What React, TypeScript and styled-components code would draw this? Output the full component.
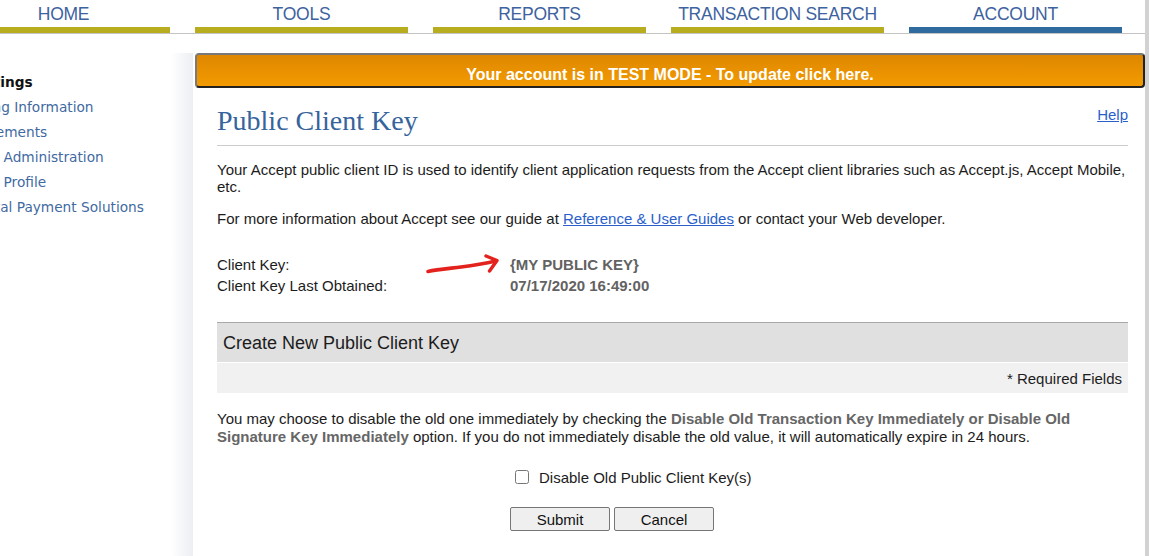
import React from "react";
import styled, { createGlobalStyle } from "styled-components";

const GlobalStyle = createGlobalStyle`
  html, body {
    margin: 0;
    padding: 0;
    background: #fff;
    overflow: hidden;
  }
  body {
    font-family: "Liberation Sans", Arial, sans-serif;
    color: #1e1e1e;
  }
`;

type TabItem = { label: string; active?: boolean };

const tabs: TabItem[] = [
  { label: "HOME" },
  { label: "TOOLS" },
  { label: "REPORTS" },
  { label: "TRANSACTION SEARCH" },
  { label: "ACCOUNT", active: true },
];

const sideLinks = [
  "Billing Information",
  "Statements",
  "User Administration",
  "User Profile",
  "Digital Payment Solutions",
];

const App: React.FC = () => {
  return (
    <>
      <GlobalStyle />
      <Page>
        <Nav>
          {tabs.map((t) => (
            <Tab key={t.label} $active={t.active}>
              <span>{t.label}</span>
            </Tab>
          ))}
        </Nav>

        <Body>
          <Sidebar>
            <SideHeading>Settings</SideHeading>
            {sideLinks.map((l) => (
              <SideLink key={l}>{l}</SideLink>
            ))}
          </Sidebar>

          <Main>
            <Banner>Your account is in TEST MODE - To update click here.</Banner>

            <Content>
              <TitleRow>
                <Title>Public Client Key</Title>
                <HelpLink href="#">Help</HelpLink>
              </TitleRow>

              <Para>
                Your Accept public client ID is used to identify client
                application requests from the Accept client libraries such as
                Accept.js, Accept Mobile, etc.
              </Para>
              <Para>
                For more information about Accept see our guide at{" "}
                <Link href="#">Reference &amp; User Guides</Link> or contact
                your Web developer.
              </Para>

              <KeyTable>
                <span>Client Key:</span>
                <KeyValue>{"{MY PUBLIC KEY}"}</KeyValue>
                <span>Client Key Last Obtained:</span>
                <KeyValue>07/17/2020 16:49:00</KeyValue>
                <Arrow width="78" height="24" viewBox="0 0 78 24">
                  <path
                    d="M3 18.5 C 12 16.5, 24 15.5, 36 14 C 48 12.5, 60 10.5, 71 8"
                    fill="none"
                    stroke="#e3211d"
                    strokeWidth="3.6"
                    strokeLinecap="round"
                  />
                  <path
                    d="M61 3 L72 7.5 L64.5 18"
                    fill="none"
                    stroke="#e3211d"
                    strokeWidth="3.4"
                    strokeLinecap="round"
                    strokeLinejoin="round"
                  />
                </Arrow>
              </KeyTable>

              <Section>
                <SectionHeader>Create New Public Client Key</SectionHeader>
                <SectionSub>* Required Fields</SectionSub>
              </Section>

              <SmallPara>
                You may choose to disable the old one immediately by checking
                the{" "}
                <strong>
                  Disable Old Transaction Key Immediately or Disable Old
                  Signature Key Immediately
                </strong>{" "}
                option. If you do not immediately disable the old value, it will
                automatically expire in 24 hours.
              </SmallPara>

              <FormColumn>
                <CheckRow>
                  <input type="checkbox" />
                  <span>Disable Old Public Client Key(s)</span>
                </CheckRow>
                <Buttons>
                  <Button>Submit</Button>
                  <Button>Cancel</Button>
                </Buttons>
              </FormColumn>
            </Content>
          </Main>
        </Body>
      </Page>
    </>
  );
};

export default App;

const Page = styled.div`
  width: 1188px;
  height: 556px;
  overflow: hidden;
  margin-left: -43px;
  border-right: 4px solid #d2d2d2;
`;

const Nav = styled.div`
  display: grid;
  grid-template-columns: repeat(5, 213px);
  column-gap: 25px;
  border-bottom: 1px solid #c4c4c4;
`;

const Tab = styled.div<{ $active?: boolean }>`
  display: flex;
  flex-direction: column;
  align-items: center;
  padding-top: 1px;
  span {
    height: 26px;
    line-height: 26px;
    font-size: 17.5px;
    letter-spacing: -0.25px;
    color: #3d62a0;
  }
  &::after {
    content: "";
    align-self: stretch;
    height: 6px;
    background: ${(p) => (p.$active ? "#2f6b9f" : "#b8ad1f")};
  }
`;

const Body = styled.div`
  display: flex;
  padding-top: 19px;
`;

const Sidebar = styled.div`
  box-sizing: border-box;
  width: 236px;
  min-height: 503px;
  flex-shrink: 0;
  padding: 17px 0 0 11px;
  font-family: "DejaVu Sans", Verdana, sans-serif;
  font-size: 13.7px;
  line-height: 25px;
  background: linear-gradient(
    to right,
    #fff 0,
    #fff calc(100% - 22px),
    #eceef2 100%
  );
`;

const SideHeading = styled.div`
  font-weight: bold;
  color: #111;
`;

const SideLink = styled.div`
  color: #3f6aa2;
  white-space: nowrap;
`;

const Main = styled.div`
  flex: 1;
  min-width: 0;
`;

const Banner = styled.div`
  margin-left: 2px;
  height: 28px;
  padding-top: 3px;
  line-height: 33px;
  border: 2px solid #222;
  border-top-color: #787878;
  border-left-color: #7a7a7a;
  border-radius: 4px;
  background: linear-gradient(#de8700, #f39b00);
  color: #fff;
  font-weight: bold;
  font-size: 16px;
  text-align: center;
`;

const Content = styled.div`
  padding: 0 17px 0 24px;
`;

const TitleRow = styled.div`
  display: flex;
  justify-content: space-between;
  align-items: flex-start;
  margin-top: 17px;
  padding-bottom: 10px;
  border-bottom: 1px solid #cccccc;
`;

const Title = styled.h1`
  margin: 0;
  height: 30px;
  line-height: 31px;
  font-family: "Liberation Serif", "Times New Roman", serif;
  font-weight: normal;
  font-size: 28px;
  color: #36649c;
`;

const Link = styled.a`
  color: #2a5fcb;
  text-decoration: underline;
  font-size: 15px;
  line-height: 18px;
`;

const HelpLink = styled(Link)`
  line-height: 19px;
`;

const Para = styled.p`
  margin: 15px 0 0;
  font-size: 15px;
  line-height: 17px;
  color: #1c1c1c;
`;

const KeyTable = styled.div`
  position: relative;
  display: grid;
  grid-template-columns: 293px auto;
  margin-top: 26px;
  font-size: 15px;
  line-height: 21px;
  color: #1c1c1c;
`;

const KeyValue = styled.span`
  font-weight: bold;
  color: #626262;
`;

const Arrow = styled.svg`
  position: absolute;
  left: 208px;
  top: -1px;
`;

const Section = styled.div`
  margin-top: 26px;
  border-top: 1px solid #a9a9a9;
`;

const SectionHeader = styled.div`
  height: 39px;
  line-height: 40px;
  padding-left: 6px;
  background: #e0e0e0;
  border-bottom: 1px solid #fff;
  font-size: 18px;
  color: #1c1c1c;
`;

const SectionSub = styled.div`
  height: 30px;
  line-height: 32px;
  padding-right: 6px;
  background: #f1f1f1;
  text-align: right;
  font-size: 15px;
  color: #1c1c1c;
`;

const SmallPara = styled.p`
  margin: 17px 0 0;
  font-size: 15px;
  line-height: 18px;
  color: #1c1c1c;
  strong {
    color: #666;
  }
`;

const FormColumn = styled.div`
  padding-left: 293px;
  margin-top: 21px;
`;

const CheckRow = styled.label`
  display: flex;
  align-items: center;
  height: 20px;
  font-size: 15px;
  color: #1c1c1c;
  input {
    width: 14px;
    height: 14px;
    margin: 0 10px 0 5px;
  }
`;

const Buttons = styled.div`
  display: flex;
  gap: 4px;
  margin-top: 20px;
`;

const Button = styled.button`
  width: 100px;
  height: 24px;
  padding: 0;
  border: 1px solid #767676;
  border-radius: 2px;
  background: #efefef;
  font-family: "Liberation Sans", Arial, sans-serif;
  font-size: 15px;
  color: #111;
`;
